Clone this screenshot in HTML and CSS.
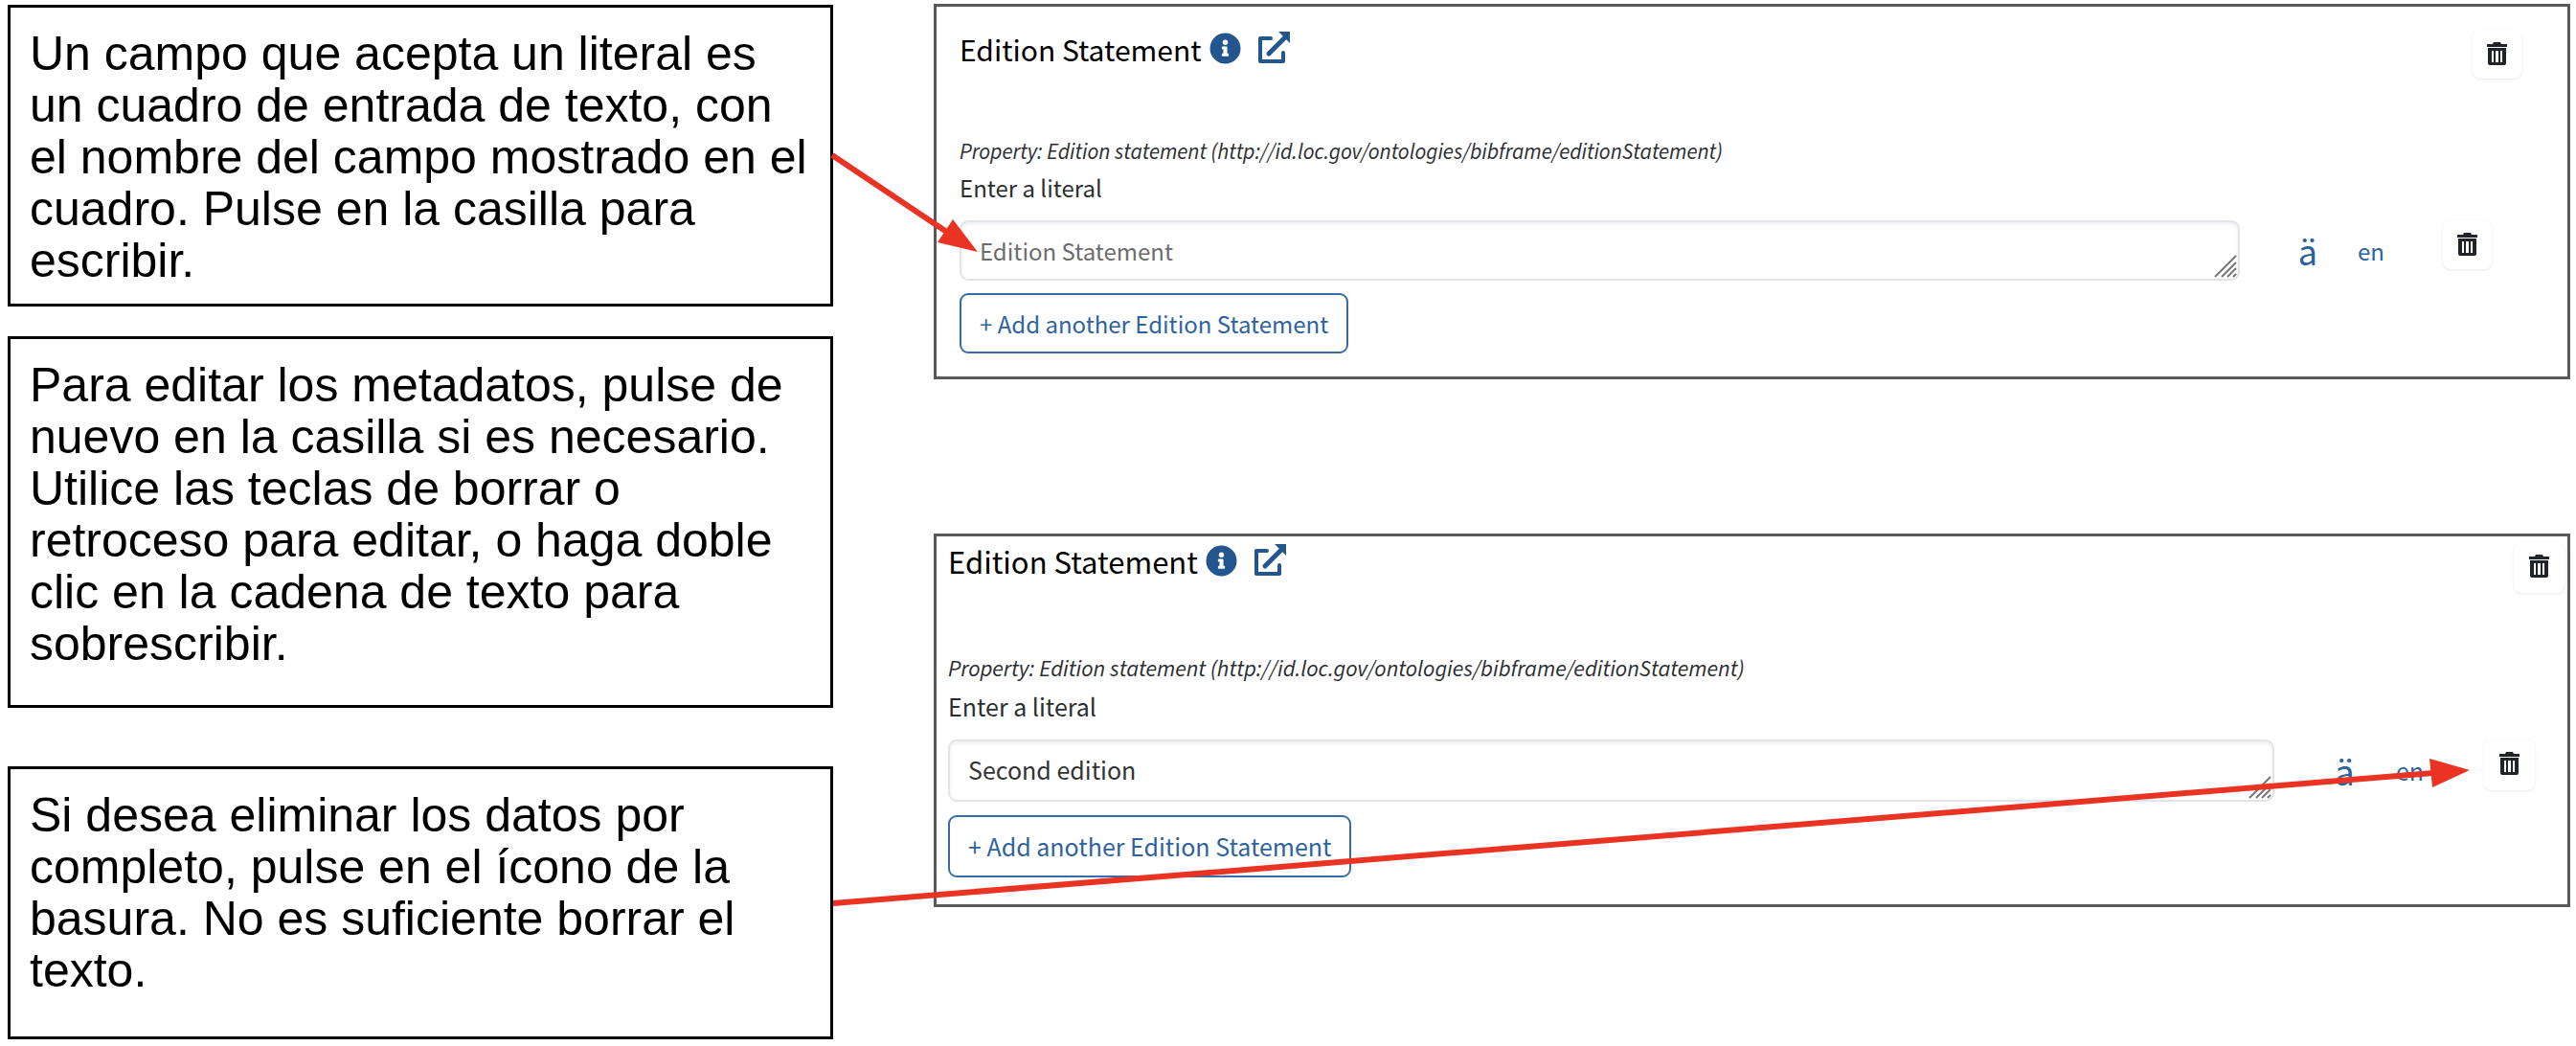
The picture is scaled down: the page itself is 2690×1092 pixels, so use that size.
FILE: index.html
```html
<!DOCTYPE html>
<html lang="es">
<head>
<meta charset="utf-8">
<title>Campos literales</title>
<link rel="stylesheet" href="styles.css">
</head>
<body>
<svg class="sprite" aria-hidden="true">
  <symbol id="icon-info" viewBox="0 0 512 512"><path fill-rule="evenodd" d="M256 8a248 248 0 1 0 0 496 248 248 0 0 0 0-496zm0 110a42 42 0 1 1 0 84 42 42 0 0 1 0-84zm56 254c0 7-5 12-12 12h-88c-7 0-12-5-12-12v-24c0-7 5-12 12-12h12v-64h-12c-7 0-12-5-12-12v-24c0-7 5-12 12-12h64c7 0 12 5 12 12v100h12c7 0 12 5 12 12z"/></symbol>
  <symbol id="icon-open" viewBox="0 0 34 34"><path d="M14 7H3v24h24V22" fill="none" stroke="currentColor" stroke-width="4" stroke-linejoin="round" stroke-linecap="round"/><path d="M12 23L28 7" fill="none" stroke="currentColor" stroke-width="5" stroke-linecap="round"/><path d="M22 0h12v12z"/></symbol>
  <symbol id="icon-trash" viewBox="0 0 21 24"><path fill-rule="evenodd" d="M0 2h6l1-2h7l1 2h6v3H0zM1 6h19v16a2 2 0 0 1-2 2H3a2 2 0 0 1-2-2zM5 9v12h2V9zm4 0v12h3V9zm5 0v12h2V9z"/></symbol>
  <symbol id="icon-grip" viewBox="0 0 24 24"><path d="M1 23L23 1M8 23L23 8M14 23l9-9M20 23l3-3" fill="none" stroke="currentColor" stroke-width="2"/></symbol>
</svg>
<main class="page">
  <section class="notes">
    <p class="note note-write">Un campo que acepta un literal es un cuadro de entrada de texto, con el nombre del campo mostrado en el cuadro. Pulse en la casilla para escribir.</p>
    <p class="note note-edit">Para editar los metadatos, pulse de nuevo en la casilla si es necesario. Utilice las teclas de borrar o retroceso para editar, o haga doble clic en la cadena de texto para sobrescribir.</p>
    <p class="note note-delete">Si desea eliminar los datos por completo, pulse en el ícono de la basura. No es suficiente borrar el texto.</p>
  </section>
  <section class="panels" lang="en">
    <article class="panel">
      <header class="panel-head">
        <h2 class="title">Edition Statement</h2>
        <a class="icon-link" href="#info" aria-label="Info"><svg class="info"><use href="#icon-info"/></svg></a>
        <a class="icon-link" href="#open" aria-label="Open"><svg class="open"><use href="#icon-open"/></svg></a>
        <button class="trash" type="button" aria-label="Remove property"><svg><use href="#icon-trash"/></svg></button>
      </header>
      <p class="property">Property: Edition statement (http://id.loc.gov/ontologies/bibframe/editionStatement)</p>
      <label class="label" for="literal-empty">Enter a literal</label>
      <div class="row">
        <div class="field">
          <textarea id="literal-empty" rows="1" placeholder="Edition Statement"></textarea>
          <svg class="grip"><use href="#icon-grip"/></svg>
        </div>
        <a class="diacritic" href="#diacritics">ä</a>
        <a class="lang" href="#language">en</a>
        <button class="trash trash-row" type="button" aria-label="Remove literal"><svg><use href="#icon-trash"/></svg></button>
      </div>
      <button class="add" type="button">+ Add another Edition Statement</button>
    </article>
    <article class="panel panel-filled">
      <header class="panel-head">
        <h2 class="title">Edition Statement</h2>
        <a class="icon-link" href="#info" aria-label="Info"><svg class="info"><use href="#icon-info"/></svg></a>
        <a class="icon-link" href="#open" aria-label="Open"><svg class="open"><use href="#icon-open"/></svg></a>
        <button class="trash" type="button" aria-label="Remove property"><svg><use href="#icon-trash"/></svg></button>
      </header>
      <p class="property">Property: Edition statement (http://id.loc.gov/ontologies/bibframe/editionStatement)</p>
      <label class="label" for="literal-filled">Enter a literal</label>
      <div class="row">
        <div class="field">
          <textarea id="literal-filled" rows="1">Second edition</textarea>
          <svg class="grip"><use href="#icon-grip"/></svg>
        </div>
        <a class="diacritic" href="#diacritics">ä</a>
        <a class="lang" href="#language">en</a>
        <button class="trash trash-row" type="button" aria-label="Remove literal"><svg><use href="#icon-trash"/></svg></button>
      </div>
      <button class="add" type="button">+ Add another Edition Statement</button>
    </article>
  </section>
  <svg class="arrows" viewBox="0 0 2690 1092" preserveAspectRatio="none" aria-hidden="true">
    <path class="shaft" d="M869 162L990 243M870 943L2541 807"/>
    <path class="head" d="M1021 263L995 229L979 253zM2579 804L2537 792L2540 822z"/>
  </svg>
</main>
</body>
</html>
```

FILE: styles.css
```css
* {
  box-sizing: border-box;
}

body {
  margin: 0;
  background: #fff;
}

h2,
p {
  margin: 0;
}

.sprite {
  display: none;
}

svg {
  display: block;
  fill: currentColor;
}

.page {
  position: relative;
  display: grid;
  grid-template-columns: 862fr 1709fr;
  column-gap: 105px;
  align-items: start;
  min-height: 100vh;
  padding: 4px 6px 4px 8px;
}

/* Explanatory notes */

.notes {
  display: flex;
  flex-direction: column;
  padding-top: 1px;
}

.note {
  padding: 21px 20px 18px;
  border: 3px solid #000;
  color: #000;
  font: 50px/54px "Liberation Sans", Arial, sans-serif;
}

.note-edit {
  margin-top: 31px;
  padding-bottom: 37px;
}

.note-delete {
  margin-top: 61px;
  padding-bottom: 42px;
}

/* Form panels */

.panels {
  display: flex;
  flex-direction: column;
  gap: 161px;
  font-family: "Noto Sans CJK SC", sans-serif;
}

.panel {
  --title: 30px;
  --small: 23px;
  --small-line: 32px;
  --text: 24px;
  --label-line: 40px;
  --large: 36px;
  --control: 63px;
  --trash: 51px;
  --gap: 13px;
  --gap-wide: 61px;
  --gap-links: 42px;
  padding: 24px 48px 24px 24px;
  border: 3px solid #595959;
  color: #2b2e32;
}

.panel-filled {
  --title: 31px;
  --small: 24px;
  --small-line: 34px;
  --text: 25px;
  --label-line: 41px;
  --large: 37px;
  --control: 65px;
  --trash: 53px;
  --gap: 14px;
  --gap-wide: 63px;
  --gap-links: 43px;
  padding: 6px 3px 28px 12px;
}

.panel-head {
  display: flex;
  align-items: flex-start;
  margin-bottom: var(--gap-wide);
}

.title {
  color: #000;
  font-size: var(--title);
  font-weight: 400;
  line-height: 40px;
}

.icon-link {
  color: #23568f;
}

.info {
  width: 33px;
  height: 33px;
  margin: 3px 0 0 8px;
}

.open {
  width: 34px;
  height: 34px;
  margin: 2px 0 0 17px;
}

.property {
  font-family: "Source Sans 3", "Noto Sans CJK SC", sans-serif;
  font-size: var(--small);
  font-style: italic;
  line-height: var(--small-line);
}

.label {
  display: block;
  margin: 1px 0 14px;
  font-size: var(--text);
  line-height: var(--label-line);
}

.row {
  display: flex;
  align-items: flex-start;
  margin-bottom: var(--gap);
}

.field {
  position: relative;
  flex: 1;
}

textarea {
  display: block;
  width: 100%;
  height: var(--control);
  padding: 11px 19px;
  overflow: hidden;
  border: 2px solid #e1e4e9;
  border-radius: 9px;
  background: #fff;
  box-shadow: inset 0 2px 4px rgba(0, 0, 0, 0.07);
  color: #333;
  font: var(--text)/37px "Noto Sans CJK SC", sans-serif;
  resize: none;
}

textarea::placeholder {
  color: #6c6c6c;
  opacity: 1;
}

.grip {
  position: absolute;
  right: 3px;
  bottom: 3px;
  width: 24px;
  height: 24px;
  color: #777;
}

.diacritic,
.lang {
  color: #2a62a0;
  line-height: var(--control);
  text-decoration: none;
}

.diacritic {
  margin: 0 var(--gap-links) 0 var(--gap-wide);
  font-size: var(--large);
}

.lang {
  margin-right: var(--gap-wide);
  font-size: var(--text);
}

.trash {
  display: flex;
  align-items: flex-start;
  justify-content: center;
  width: var(--trash);
  height: var(--trash);
  margin-left: auto;
  padding: 13px 0 0;
  border: 0;
  border-radius: 8px;
  background: #fff;
  box-shadow: 0 1px 3px rgba(0, 0, 0, 0.1);
  color: #212529;
}

.trash svg {
  width: 21px;
  height: 24px;
}

.trash-row {
  margin: 0 31px 0 0;
}

.add {
  display: block;
  height: var(--control);
  padding: 0 19px;
  border: 2px solid #386ca6;
  border-radius: 9px;
  background: #fff;
  color: #2d639e;
  font: var(--text)/37px "Noto Sans CJK SC", sans-serif;
}

/* Callout arrows over the panels */

.arrows {
  position: absolute;
  inset: 0;
  width: 100%;
  height: 100%;
  pointer-events: none;
}

.shaft {
  fill: none;
  stroke: #ea3323;
  stroke-width: 6;
}

.head {
  fill: #ea3323;
}
```
